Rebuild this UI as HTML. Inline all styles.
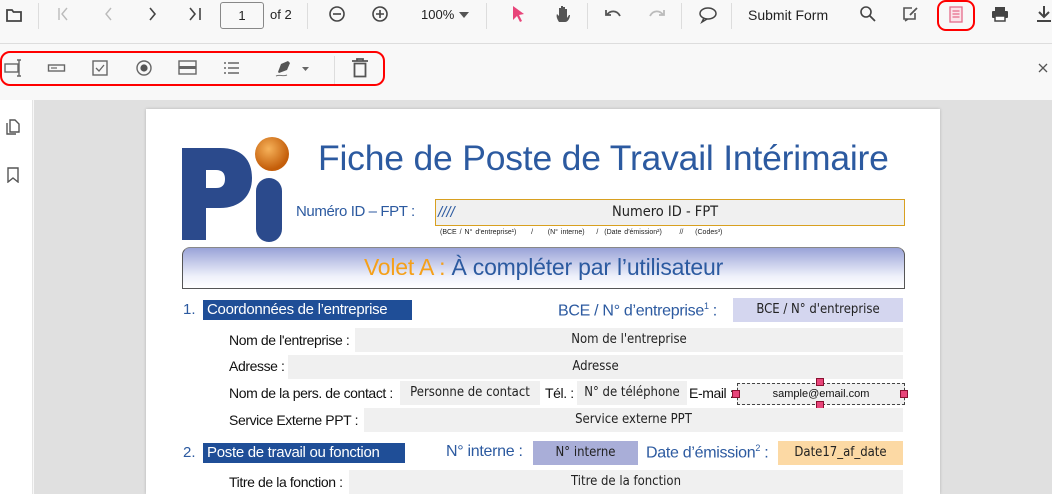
<!DOCTYPE html>
<html style="width:1052px;height:494px;overflow:hidden"><head><meta charset="utf-8"><style>
*{margin:0;padding:0;box-sizing:border-box}
body{width:1052px;height:494px;overflow:hidden;background:#f8f8f8;font-family:"Liberation Sans",Arial,sans-serif;position:relative}
.a{position:absolute}
.sep{position:absolute;width:1px;background:#ddd}
svg{position:absolute}
.f{position:absolute;background:#f0f0f0;font-family:"DejaVu Sans Condensed","DejaVu Sans",sans-serif;font-size:13px;color:#222;text-align:center;line-height:24px}
.lb{position:absolute;font-size:14px;color:#111;letter-spacing:-.4px}
.bl{color:#2c5aa0}
</style></head><body>
<div class="a" style="left:0;top:43px;width:1052px;height:1px;background:#ddd"></div>
<svg style="left:5px;top:6px" width="18" height="18" viewBox="0 0 18 18"><path d="M2 4h5l1.5 2H16v9H2z" fill="none" stroke="#444" stroke-width="1.8"/></svg>
<div class="sep" style="left:38px;top:3px;height:26px"></div>
<svg style="left:56px;top:7px" width="14" height="14" viewBox="0 0 14 14"><path d="M3 1v12M11 1L6 7l5 6" fill="none" stroke="#bbb" stroke-width="1.4"/></svg>
<svg style="left:102px;top:7px" width="14" height="14" viewBox="0 0 14 14"><path d="M9 1L4 7l5 6" fill="none" stroke="#bbb" stroke-width="1.4"/></svg>
<svg style="left:145px;top:7px" width="14" height="14" viewBox="0 0 14 14"><path d="M5 1l5 6-5 6" fill="none" stroke="#444" stroke-width="1.6"/></svg>
<svg style="left:188px;top:7px" width="16" height="14" viewBox="0 0 16 14"><path d="M2 1l5 6-5 6M12 1v12" fill="none" stroke="#444" stroke-width="1.6"/></svg>
<div class="a" style="left:220px;top:2px;width:44px;height:27px;border:1px solid #888;border-radius:3px;font-size:13px;text-align:center;line-height:25px;color:#222">1</div>
<div class="a" style="left:270px;top:7px;font-size:13px;color:#222">of 2</div>
<div class="sep" style="left:307px;top:3px;height:26px"></div>
<svg style="left:328px;top:5px" width="18" height="18" viewBox="0 0 18 18"><circle cx="9" cy="9" r="7" fill="none" stroke="#444" stroke-width="1.6"/><path d="M5 9h8" stroke="#444" stroke-width="1.6"/></svg>
<svg style="left:371px;top:5px" width="18" height="18" viewBox="0 0 18 18"><circle cx="9" cy="9" r="7" fill="none" stroke="#444" stroke-width="1.6"/><path d="M5 9h8M9 5v8" stroke="#444" stroke-width="1.6"/></svg>
<div class="a" style="left:421px;top:7px;font-size:13px;color:#222">100%</div>
<svg style="left:458px;top:11px" width="12" height="8" viewBox="0 0 12 8"><path d="M1 1h10L6 7z" fill="#555"/></svg>
<div class="sep" style="left:486px;top:3px;height:26px"></div>
<svg style="left:510px;top:5px" width="16" height="18" viewBox="0 0 16 18"><path d="M3 1l11 8-5 1 3 6-2 1-3-6-4 4z" fill="#e8457a"/></svg>
<svg style="left:555px;top:4px" width="18" height="20" viewBox="0 0 18 20"><path d="M4 18c-2-3-3-6-2-8l2 2V4h2v6V2h2v8V3h2v7V5h2v9l2-3h1c0 3-2 7-5 7z" fill="#555"/></svg>
<div class="sep" style="left:587px;top:3px;height:26px"></div>
<svg style="left:604px;top:8px" width="18" height="12" viewBox="0 0 18 12"><path d="M2 2v5h5M3 7c3-5 10-5 13 1" fill="none" stroke="#555" stroke-width="1.8"/></svg>
<svg style="left:648px;top:8px" width="18" height="12" viewBox="0 0 18 12"><path d="M16 2v5h-5M15 7C12 2 5 2 2 8" fill="none" stroke="#bbb" stroke-width="1.8"/></svg>
<div class="sep" style="left:681px;top:3px;height:26px"></div>
<svg style="left:698px;top:6px" width="20" height="18" viewBox="0 0 20 18"><ellipse cx="10" cy="7.5" rx="8" ry="5.5" fill="none" stroke="#444" stroke-width="1.5"/><path d="M6 12l-2 4 5-3" fill="none" stroke="#444" stroke-width="1.5"/></svg>
<div class="sep" style="left:731px;top:3px;height:26px"></div>
<div class="a" style="left:748px;top:7px;font-size:14px;color:#222">Submit Form</div>
<svg style="left:859px;top:5px" width="18" height="18" viewBox="0 0 18 18"><circle cx="7" cy="7" r="5" fill="none" stroke="#444" stroke-width="1.6"/><path d="M11 11l5 5" stroke="#444" stroke-width="1.8"/></svg>
<svg style="left:902px;top:5px" width="18" height="18" viewBox="0 0 18 18"><path d="M10 3H2v11h11V8M3 16l3-2" fill="none" stroke="#555" stroke-width="1.6"/><path d="M8 10l7-7" stroke="#555" stroke-width="1.8"/></svg>
<div class="a" style="left:937px;top:0px;width:38px;height:31px;border:2.5px solid #f00;border-radius:9px"></div>
<svg style="left:949px;top:6px" width="14" height="17" viewBox="0 0 14 17"><rect x="1" y="1" width="12" height="15" fill="#fbe4ea" stroke="#e56b8a" stroke-width="1.3"/><path d="M3.5 5h7M3.5 8h7M3.5 11h7" stroke="#e56b8a" stroke-width="1.2"/></svg>
<svg style="left:991px;top:6px" width="18" height="16" viewBox="0 0 18 16"><rect x="4" y="1" width="10" height="4" fill="#444"/><rect x="1" y="5" width="16" height="7" rx="1" fill="#444"/><rect x="4" y="10" width="10" height="5" fill="#fff" stroke="#444" stroke-width="1.5"/></svg>
<svg style="left:1036px;top:5px" width="16" height="18" viewBox="0 0 16 18"><path d="M8 1v10M3 7l5 5 5-5M1 16h14" fill="none" stroke="#444" stroke-width="2"/></svg>
<div class="a" style="left:0;top:51px;width:385px;height:35px;border:2.5px solid #f00;border-radius:10px"></div>
<svg style="left:4px;top:59px" width="20" height="18" viewBox="0 0 20 18"><rect x="1" y="5" width="13" height="8" fill="none" stroke="#666" stroke-width="1.4"/><path d="M15 1v16M13 1h4M13 17h4" stroke="#666" stroke-width="1.4"/></svg>
<svg style="left:47px;top:62px" width="20" height="12" viewBox="0 0 20 12"><rect x="1.5" y="3" width="16" height="6" fill="none" stroke="#666" stroke-width="1.4"/><path d="M4 6h6" stroke="#666" stroke-width="1.2"/></svg>
<svg style="left:91px;top:59px" width="18" height="18" viewBox="0 0 18 18"><rect x="2" y="2" width="14" height="14" fill="none" stroke="#666" stroke-width="1.4"/><path d="M5 9l3 3 5-6" fill="none" stroke="#666" stroke-width="1.3"/></svg>
<svg style="left:135px;top:59px" width="18" height="18" viewBox="0 0 18 18"><circle cx="9" cy="9" r="7" fill="none" stroke="#666" stroke-width="1.4"/><circle cx="9" cy="9" r="3.6" fill="#555"/></svg>
<svg style="left:178px;top:60px" width="20" height="16" viewBox="0 0 20 16"><rect x="1" y="1" width="17" height="13" fill="none" stroke="#666" stroke-width="1.4"/><rect x="1" y="6" width="17" height="3" fill="#666"/></svg>
<svg style="left:223px;top:60px" width="18" height="16" viewBox="0 0 18 16"><path d="M1 3h2M5 3h11M1 8h2M5 8h11M1 13h2M5 13h11" stroke="#666" stroke-width="1.4"/></svg>
<svg style="left:274px;top:58px" width="22" height="20" viewBox="0 0 22 20"><path d="M4 14l3-8 7-3 2 2-3 7-8 3z" fill="#555"/><path d="M2 18c4-2 7 1 11-1" fill="none" stroke="#777"/></svg>
<svg style="left:301px;top:66px" width="9" height="6" viewBox="0 0 9 6"><path d="M1 1h7L4.5 5z" fill="#666"/></svg>
<div class="sep" style="left:334px;top:56px;height:28px"></div>
<svg style="left:351px;top:58px" width="18" height="20" viewBox="0 0 18 20"><path d="M1 3h16M6 3V1h6v2M3.5 5.5h11v13h-11z" fill="none" stroke="#555" stroke-width="1.8"/></svg>
<svg style="left:1037px;top:62px" width="12" height="12" viewBox="0 0 12 12"><path d="M2 2l8 8M10 2l-8 8" stroke="#555" stroke-width="1.3"/></svg>
<div class="a" style="left:0;top:100px;width:33px;height:394px;background:#fff;border-right:1px solid #e5e5e5"></div>
<svg style="left:5px;top:118px" width="16" height="18" viewBox="0 0 16 18"><path d="M5 2h5l4 4v8H5z" fill="none" stroke="#555" stroke-width="1.4"/><path d="M2 5v11h9" fill="none" stroke="#555" stroke-width="1.4"/></svg>
<svg style="left:6px;top:167px" width="14" height="16" viewBox="0 0 14 16"><path d="M2 1h10v14l-5-4-5 4z" fill="none" stroke="#555" stroke-width="1.4"/></svg>
<div class="a" style="left:34px;top:100px;width:1018px;height:394px;background:#e0e0e0"></div>
<div class="a" style="left:146px;top:109px;width:794px;height:385px;background:#fff;box-shadow:0 0 3px rgba(0,0,0,.2)"></div>
<svg style="left:180px;top:130px" width="115" height="112" viewBox="0 0 115 112"><defs><radialGradient id="o" cx=".4" cy=".35" r=".6"><stop offset="0" stop-color="#f6b25a"/><stop offset="1" stop-color="#c45e0a"/></radialGradient></defs><path d="M2 18h38c22 0 32 12 32 30s-12 30-32 30H26v32H2z M26 40v18h10c6 0 9-3 9-9s-3-9-9-9z" fill="#2b4a8c" fill-rule="evenodd"/><rect x="76" y="48" width="26" height="64" rx="13" fill="#2b4a8c"/><circle cx="92" cy="24" r="17" fill="url(#o)"/></svg>
<div class="a" style="left:318px;top:138px;font-size:35.5px;color:#2c5aa0;letter-spacing:-.2px">Fiche de Poste de Travail Intérimaire</div>
<div class="a" style="left:296px;top:203px;font-size:15px;color:#2c5aa0;letter-spacing:-.4px">Numéro ID – FPT :</div>
<div class="a" style="left:435px;top:199px;width:470px;height:27px;background:#f0f0f0;border:1px solid #d8a020"></div>
<div class="a" style="left:438px;top:204px;font-size:15px;font-style:italic;color:#2c5aa0">////</div>
<div class="a" style="left:612px;top:204px;font-family:'DejaVu Sans Condensed','DejaVu Sans',sans-serif;font-size:14.5px;color:#222">Numero ID - FPT</div>
<div class="a" style="left:440px;top:229px;font-size:7px;color:#222;word-spacing:1px">(BCE / N° d'entreprise¹) &nbsp;&nbsp;&nbsp;&nbsp;/ &nbsp;&nbsp;&nbsp;&nbsp;(N° interne) &nbsp;&nbsp;&nbsp;/ &nbsp;(Date d'émission²) &nbsp;&nbsp;&nbsp;&nbsp;&nbsp;// &nbsp;&nbsp;&nbsp;(Codes³)</div>
<div class="a" style="left:182px;top:247px;width:723px;height:42px;border:1px solid #555;border-top-color:#888;border-radius:8px 8px 0 0;background:linear-gradient(#9aa3d8,#eef0fa 70%,#fff)"></div>
<div class="a" style="left:182px;top:254px;width:723px;text-align:center;font-size:23px;color:#2c5aa0;letter-spacing:-.2px"><span style="color:#f5a01a">Volet A :</span> À compléter par l’utilisateur</div>
<div class="a bl" style="left:183px;top:301px;font-size:15px">1.</div>
<div class="a" style="left:203px;top:300px;width:209px;height:20px;background:#1f4e97;color:#fff;font-size:15px;padding-left:4px;line-height:20px;letter-spacing:-.3px">Coordonnées de l’entreprise</div>
<div class="a bl" style="left:558px;top:301px;font-size:16px;letter-spacing:-.3px">BCE / N° d’entreprise<sup style="font-size:9px">1</sup> :</div>
<div class="f" style="left:733px;top:298px;width:170px;background:#d4d6ef">BCE / N° d'entreprise</div>
<div class="lb" style="left:229px;top:332px">Nom de l'entreprise :</div>
<div class="f" style="left:355px;top:328px;width:548px">Nom de l'entreprise</div>
<div class="lb" style="left:229px;top:358px">Adresse :</div>
<div class="f" style="left:288px;top:355px;width:615px">Adresse</div>
<div class="lb" style="left:229px;top:385px">Nom de la pers. de contact :</div>
<div class="f" style="left:400px;top:381px;width:140px">Personne de contact</div>
<div class="lb" style="left:545px;top:385px">Tél. :</div>
<div class="f" style="left:577px;top:381px;width:110px">N° de téléphone</div>
<div class="lb" style="left:689px;top:385px">E-mail :</div>
<div class="a" style="left:737px;top:383px;width:168px;height:22px;background:#f0f0f0;border:1px dashed #444;font-size:11px;text-align:center;line-height:20px;color:#111">sample@email.com</div>
<div class="a" style="left:732px;top:390px;width:8px;height:8px;background:#e8457a;border:1px solid #8a1030"></div>
<div class="a" style="left:900px;top:390px;width:8px;height:8px;background:#e8457a;border:1px solid #8a1030"></div>
<div class="a" style="left:816px;top:378px;width:8px;height:8px;background:#e8457a;border:1px solid #8a1030"></div>
<div class="a" style="left:816px;top:401px;width:8px;height:8px;background:#e8457a;border:1px solid #8a1030"></div>
<div class="lb" style="left:229px;top:412px">Service Externe PPT :</div>
<div class="f" style="left:364px;top:408px;width:539px">Service externe PPT</div>
<div class="a bl" style="left:183px;top:444px;font-size:15px">2.</div>
<div class="a" style="left:203px;top:443px;width:202px;height:20px;background:#1f4e97;color:#fff;font-size:15px;padding-left:4px;line-height:20px;letter-spacing:-.3px">Poste de travail ou fonction</div>
<div class="a bl" style="left:446px;top:443px;font-size:16px;letter-spacing:-.3px">N° interne :</div>
<div class="f" style="left:533px;top:441px;width:105px;background:#a9aed8">N° interne</div>
<div class="a bl" style="left:646px;top:443px;font-size:16px;letter-spacing:-.3px">Date d’émission<sup style="font-size:9px">2</sup> :</div>
<div class="f" style="left:778px;top:441px;width:125px;background:#fcd9a4">Date17_af_date</div>
<div class="lb" style="left:229px;top:474px">Titre de la fonction :</div>
<div class="f" style="left:349px;top:470px;width:554px">Titre de la fonction</div>
</body></html>
